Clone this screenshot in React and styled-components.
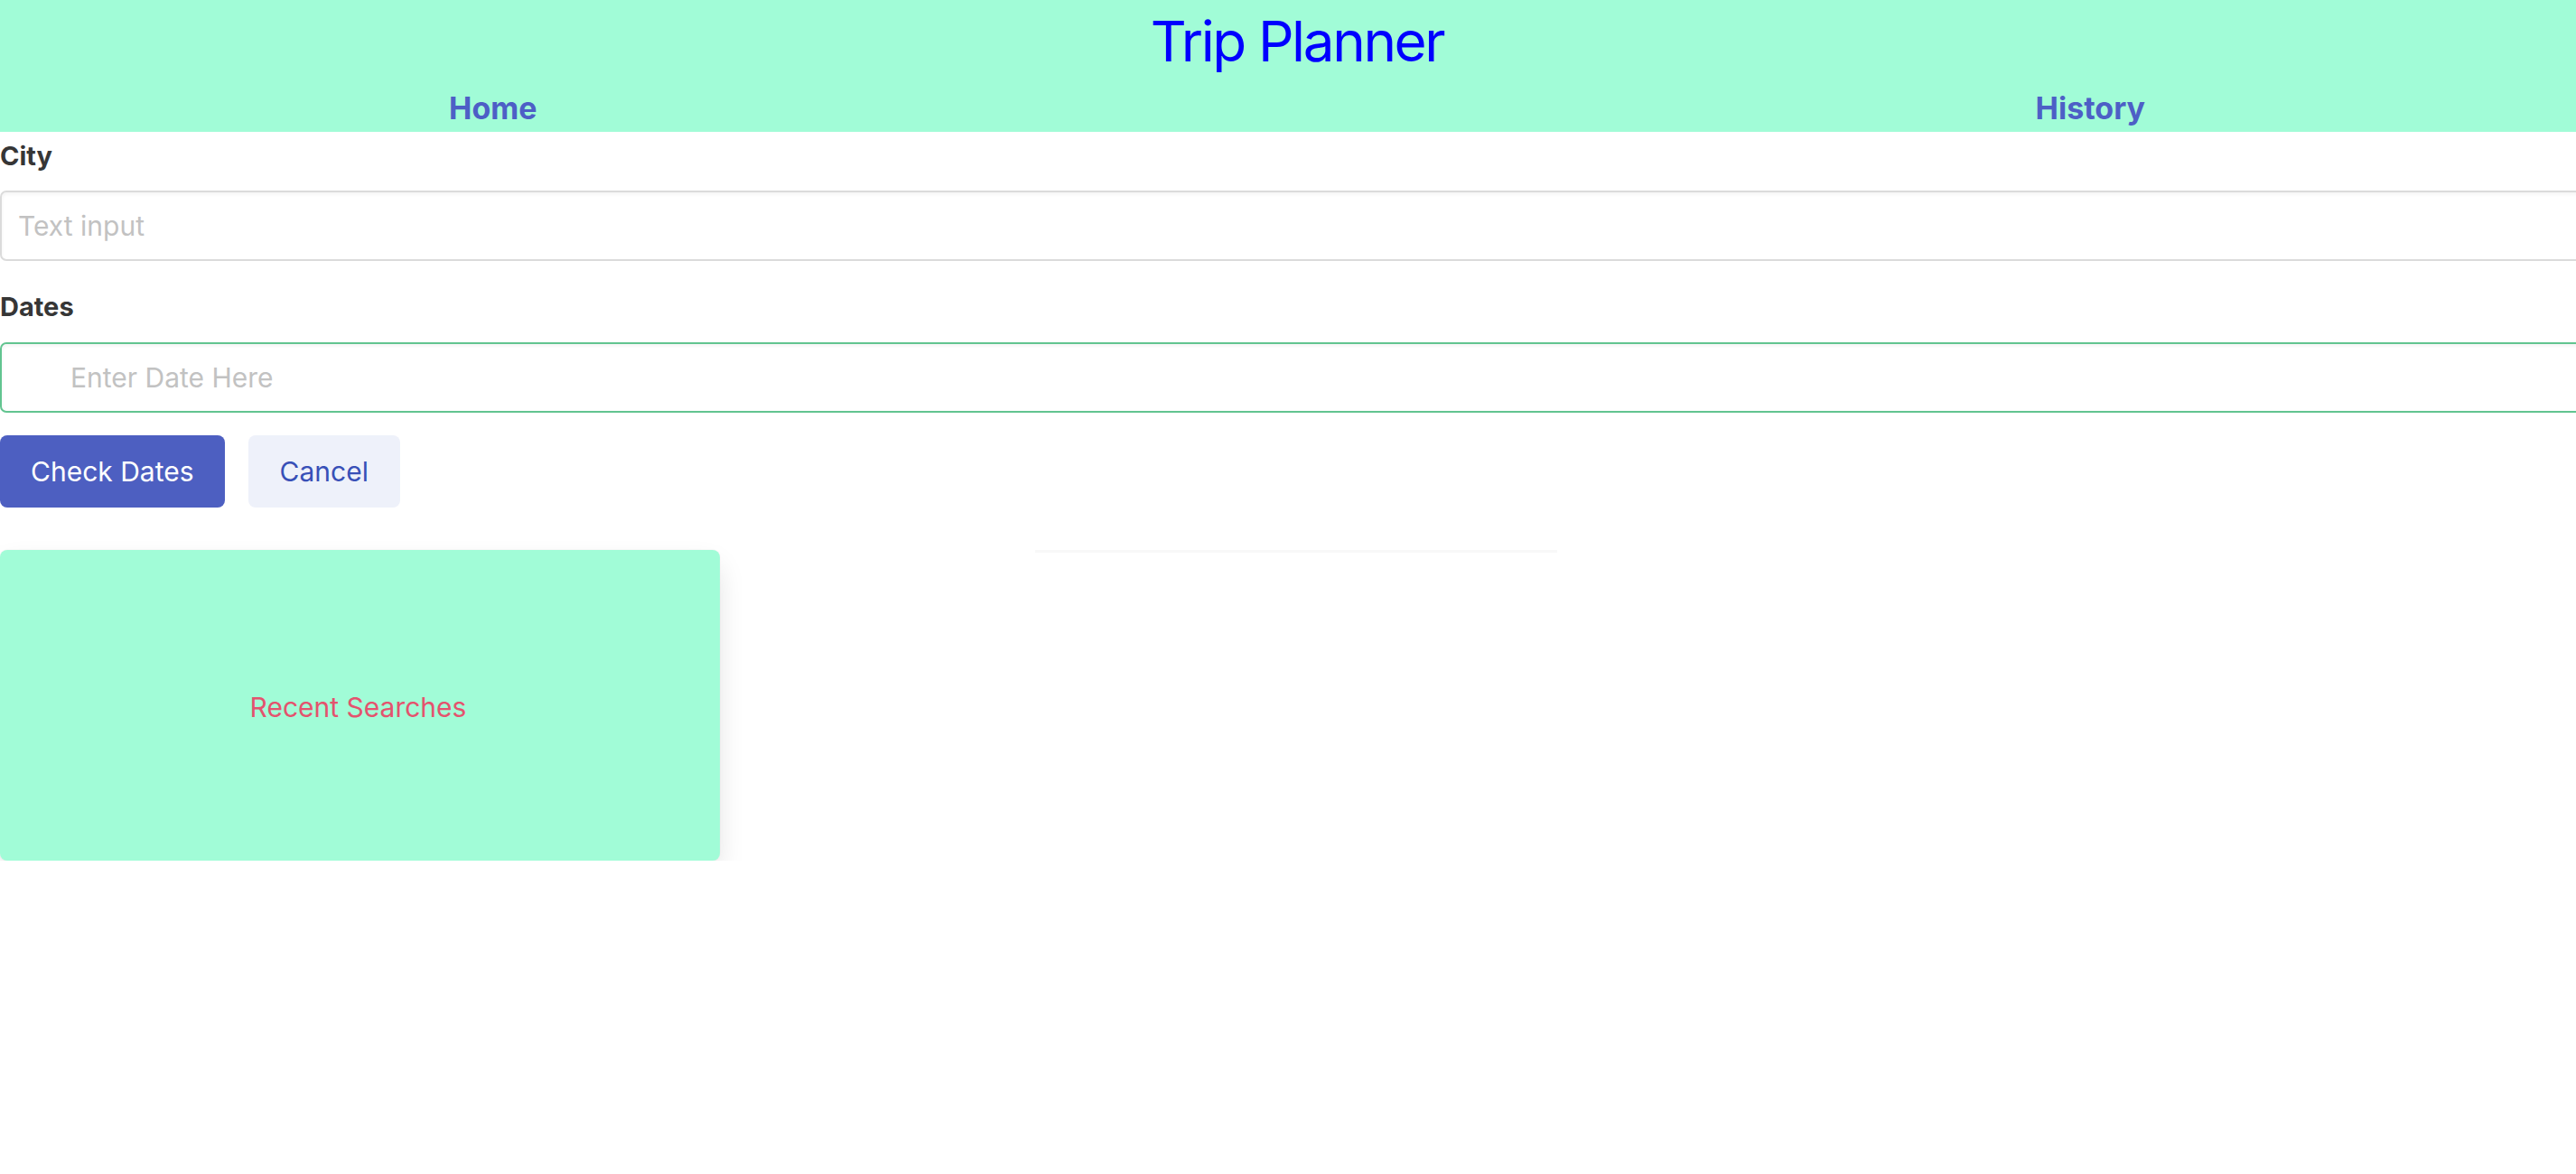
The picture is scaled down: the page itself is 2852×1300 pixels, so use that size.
import React from "react";
import styled, { createGlobalStyle } from "styled-components";

const GlobalStyle = createGlobalStyle`
  html, body {
    margin: 0;
    padding: 0;
    overflow: hidden;
    background: #ffffff;
  }
  body {
    font-family: Inter, "Noto Sans", "Liberation Sans", sans-serif;
    color: #363636;
  }
  * { box-sizing: border-box; }
`;

const Page = styled.div`
  width: calc(100vw + 20px);
  display: flex;
  flex-direction: column;
`;

const Header = styled.header`
  height: 146px;
  background: #a1fcd7;
  display: flex;
  flex-direction: column;
  padding-top: 8px;
`;

const Title = styled.h1`
  margin: 0;
  text-align: center;
  font-size: 62px;
  font-weight: 400;
  line-height: normal;
  color: #0000ff;
  letter-spacing: -2.4px;
`;

const Nav = styled.nav`
  margin-top: 16px;
  display: flex;
  justify-content: space-between;
  padding: 0 497px;
`;

const NavLink = styled.a`
  font-size: 34px;
  font-weight: 700;
  line-height: normal;
  color: #4d5fc6;
  text-decoration: none;
  cursor: pointer;
`;

const Form = styled.form`
  display: flex;
  flex-direction: column;
`;

const Label = styled.label`
  display: block;
  font-size: 29px;
  font-weight: 700;
  line-height: normal;
  color: #363636;
  margin-top: ${(p) => p.$top}px;
`;

const Input = styled.input`
  display: block;
  width: 100%;
  height: 78px;
  margin-top: ${(p) => p.$top}px;
  border: 2px solid ${(p) => (p.$success ? "#62c490" : "#dbdbdb")};
  border-radius: 7px;
  box-shadow: inset 0 2px 4px rgba(10, 10, 10, 0.05);
  padding: 0 0 0 ${(p) => p.$padLeft}px;
  font-family: Inter, "Noto Sans", "Liberation Sans", sans-serif;
  font-size: 30px;
  color: #363636;
  outline: none;
  background: #fff;
  &::placeholder {
    color: #c2c2c2;
  }
`;

const ButtonRow = styled.div`
  display: flex;
  gap: 26px;
  margin-top: 25px;
`;

const Button = styled.button`
  height: 80px;
  padding: 0 ${(p) => (p.$primary ? 34 : 35)}px;
  border: none;
  border-radius: 8px;
  font-family: Inter, "Noto Sans", "Liberation Sans", sans-serif;
  font-size: 30px;
  font-weight: 400;
  cursor: pointer;
  background: ${(p) => (p.$primary ? "#4d5fc1" : "#eef1fa")};
  color: ${(p) => (p.$primary ? "#ffffff" : "#3850b7")};
`;

const CardRow = styled.section`
  display: flex;
  align-items: flex-start;
  gap: 349px;
  margin-top: 47px;
`;

const Card = styled.div`
  width: 797px;
  height: 344px;
  background: #a1fcd7;
  border-radius: 8px;
  box-shadow: 0 15px 32px -4px rgba(10, 10, 10, 0.14),
    0 0 0 1px rgba(10, 10, 10, 0.02);
  display: flex;
  align-items: center;
  justify-content: center;
`;

const EmptyCard = styled.div`
  width: 578px;
  height: 3px;
  background: #f8f8f8;
`;

const CardText = styled.p`
  margin: 0 0 0 -4px;
  font-size: 30px;
  color: #e4536e;
  line-height: normal;
  padding-top: 4px;
`;

export default function App() {
  return (
    <>
      <GlobalStyle />
      <Page>
        <Header>
          <Title>Trip Planner</Title>
          <Nav>
            <NavLink>Home</NavLink>
            <NavLink>History</NavLink>
          </Nav>
        </Header>
        <Form onSubmit={(e) => e.preventDefault()}>
          <Label $top={9}>City</Label>
          <Input $top={21} $padLeft={18} placeholder="Text input" />
          <Label $top={33}>Dates</Label>
          <Input $top={22} $padLeft={76} $success placeholder="Enter Date Here" />
          <ButtonRow>
            <Button type="button" $primary>Check Dates</Button>
            <Button type="button">Cancel</Button>
          </ButtonRow>
        </Form>
        <CardRow>
          <Card>
            <CardText>Recent Searches</CardText>
          </Card>
          <EmptyCard />
        </CardRow>
      </Page>
    </>
  );
}
